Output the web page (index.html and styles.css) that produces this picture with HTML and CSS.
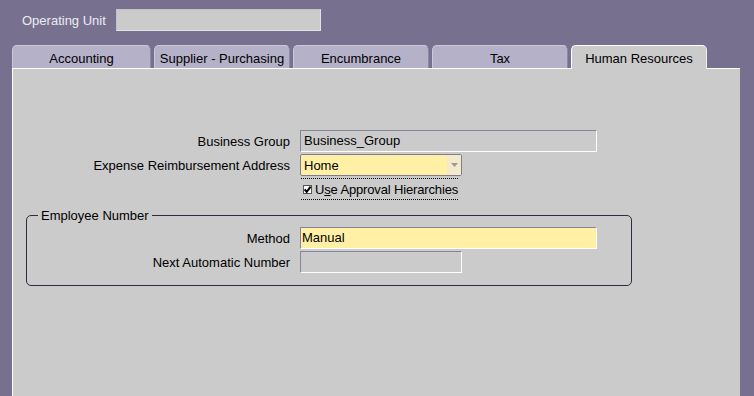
FILE: index.html
```html
<!DOCTYPE html>
<html lang="en">
<head>
  <meta charset="UTF-8">
  <title>Financials Options</title>
  <link rel="stylesheet" href="styles.css">
</head>
<body>

<div class="header">
  <span class="header-label">Operating Unit</span>
  <div class="header-field"></div>
</div>

<div class="tabs">
  <div class="tab">Accounting</div>
  <div class="tab">Supplier - Purchasing</div>
  <div class="tab">Encumbrance</div>
  <div class="tab">Tax</div>
  <div class="tab tab-active">Human Resources</div>
</div>

<div class="panel">
  <div class="form">
    <label class="label">Business Group</label>
    <div class="field field-ro field-wide">Business_Group</div>

    <label class="label">Expense Reimbursement Address</label>
    <div class="select">
      <span class="select-text">Home</span>
      <span class="select-arrow">
        <svg width="7" height="4" viewBox="0 0 7 4"><path d="M0 0 H7 L3.5 4 Z" fill="#9a9a9a"/></svg>
      </span>
    </div>

    <span></span>
    <div class="check-row">
      <label class="check">
        <svg class="check-box" width="9" height="9" viewBox="0 0 9 9">
          <rect x="0.5" y="0.5" width="8" height="8" fill="#fff" stroke="#555"/>
          <path d="M1.6 4.3 L3.7 6.8 L7.6 1.6" fill="none" stroke="#000" stroke-width="2"/>
        </svg>U<u>s</u>e Approval Hierarchies
      </label>
    </div>
  </div>

  <fieldset class="group">
    <legend class="group-title">Employee Number</legend>
    <div class="form form-inner">
      <label class="label">Method</label>
      <div class="field field-req field-wide">Manual</div>

      <label class="label">Next Automatic Number</label>
      <div class="field field-ro field-short"></div>
    </div>
  </fieldset>
</div>

</body>
</html>
```

FILE: styles.css
```css
body {
  margin: 0;
  height: 396px;
  overflow: hidden;
  background-color: #77718f;
  font-family: "Liberation Sans", Arial, sans-serif;
  font-size: 13px;
  color: #000;
}

.header {
  display: flex;
  align-items: center;
  padding: 9px 0 0 22px;
}

.header-label {
  width: 94px;
  color: #ecebf3;
}

.header-field {
  width: 205px;
  height: 22px;
  box-sizing: border-box;
  background-color: #cbcbcb;
  border: 1px solid #c2c0cc;
  border-bottom-color: #e2e1ea;
  border-right-color: #e2e1ea;
}

.tabs {
  display: flex;
  align-items: flex-start;
  gap: 3px;
  margin-top: 14px;
  padding-left: 12px;
}

.tab {
  width: 136px;
  height: 23px;
  box-sizing: border-box;
  padding-top: 3px;
  line-height: 19px;
  text-align: center;
  background-color: #b5b1c9;
  border: 1px solid #cbc7dc;
  border-right-color: #8e8aa6;
  border-bottom: none;
  border-radius: 5px 5px 0 0;
}

.tab:first-child {
  width: 139px;
}

.tab-active {
  position: relative;
  height: 24px;
  margin-bottom: -1px;
  background-color: #cbcbcb;
  border-color: #fff;
  border-right-color: #f0f0f0;
}

.panel {
  width: 728px;
  height: 340px;
  box-sizing: border-box;
  margin-left: 12px;
  padding-top: 61px;
  background-color: #cbcbcb;
  border-top: 1px solid #fff;
  border-left: 1px solid #fff;
}

.form {
  display: grid;
  grid-template-columns: 277px auto;
  column-gap: 10px;
  row-gap: 2px;
  align-items: center;
  justify-items: start;
}

.form-inner {
  grid-template-columns: 263px auto;
}

.label {
  justify-self: end;
}

.field {
  height: 22px;
  box-sizing: border-box;
  padding-left: 3px;
  line-height: 20px;
  border: 1px solid #fff;
  border-top-color: #87859a;
  border-left-color: #87859a;
}

.field-ro {
  background-color: #cbcbcb;
}

.field-req {
  background-color: #fff0a6;
  padding-left: 1px;
}

.field-wide {
  width: 297px;
}

.field-short {
  width: 162px;
}

.select {
  display: flex;
  align-items: center;
  width: 162px;
  height: 22px;
  box-sizing: border-box;
  background-color: #fff0a6;
  border: 1px solid #7f7d90;
  border-radius: 2px;
}

.select-text {
  flex: 1;
  padding-left: 3px;
}

.select-arrow {
  display: flex;
  align-items: center;
  justify-content: center;
  width: 14px;
  height: 20px;
  background-color: #f2eacb;
}

.check-row {
  height: 22px;
  box-sizing: border-box;
  border-top: 1px dotted #000;
  border-bottom: 1px dotted #000;
  display: flex;
  align-items: center;
  margin-left: 1px;
  letter-spacing: -0.15px;
}

.check {
  display: flex;
  align-items: center;
}

.check-box {
  margin: 0 3px 0 2px;
}

.group {
  width: 606px;
  box-sizing: border-box;
  margin: 8px 0 0 13px;
  padding: 4px 0 12px 0;
  border: 1px solid #2e2d3d;
  border-radius: 5px;
}

.group-title {
  margin-left: 11px;
  padding: 0 3px;
  line-height: 15px;
}
```
